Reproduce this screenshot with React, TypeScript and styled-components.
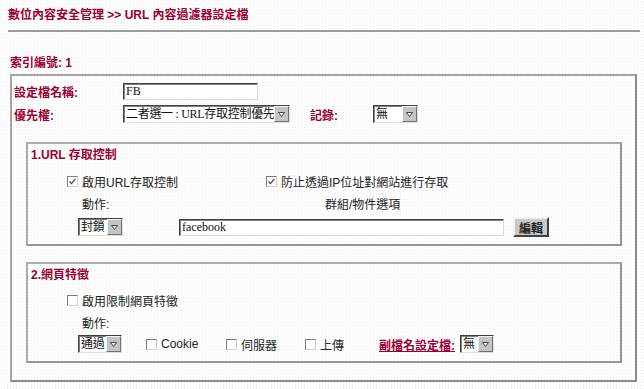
import styled, { createGlobalStyle } from "styled-components";

const GlobalStyle = createGlobalStyle`
    html, body {
        margin: 0;
        padding: 0;
        background-color: #fff;
        background-image: radial-gradient(#ececec 0.6px, transparent 0.7px);
        background-size: 3px 3px;
    }
    body {
        font-family: "Liberation Sans", "Noto Sans CJK TC", sans-serif;
        font-size: 12px;
        color: #222;
    }
`;

const Page = styled.div`
    width: 644px;
    height: 389px;
    overflow: hidden;
`;

const Header = styled.h1`
    margin: 0 4px 0 8px;
    height: 30px;
    line-height: 30px;
    font-size: 12px;
    font-weight: bold;
    color: #990033;
    border-bottom: 2px solid #9c9c9c;
    white-space: nowrap;
`;

const IndexLine = styled.div`
    margin: 24px 0 4px 10px;
    height: 14px;
    line-height: 14px;
    font-weight: bold;
    color: #990033;
`;

const OuterBox = styled.section`
    margin-left: 10px;
    width: 627px;
    height: 308px;
    box-sizing: border-box;
    border: 2px solid #a4a4a4;
    border-right-color: #8c8c8c;
    border-bottom-color: #8c8c8c;
    padding-top: 4px;
    display: flex;
    flex-direction: column;
`;

const FormRow = styled.div`
    display: flex;
    align-items: center;
    height: 22px;
    padding-left: 2px;
    & + & {
        margin-top: 1px;
    }
`;

const Label = styled.span<{ $w?: number }>`
    display: inline-block;
    width: ${(p) => (p.$w ? `${p.$w}px` : "auto")};
    font-weight: bold;
    color: #990033;
    white-space: nowrap;
`;

const LinkLabel = styled.a`
    font-weight: bold;
    color: #990033;
    text-decoration: underline;
    margin-right: 5px;
    white-space: nowrap;
    cursor: pointer;
`;

const TextInput = styled.input<{ $w: number }>`
    width: ${(p) => p.$w}px;
    height: 17px;
    box-sizing: border-box;
    padding: 0 2px;
    border: 1px solid;
    border-color: #404040 #d8d8d8 #d8d8d8 #404040;
    box-shadow: inset 1px 1px 0 #808080;
    background: #fff;
    font-family: "Liberation Serif", "Noto Sans CJK TC", serif;
    font-size: 12px;
    color: #111;
    outline: none;
`;

const SelectBox = styled.span<{ $w: number }>`
    display: inline-flex;
    align-items: stretch;
    width: ${(p) => p.$w}px;
    height: 18px;
    box-sizing: border-box;
    border: 1px solid;
    border-color: #404040 #e0e0e0 #e0e0e0 #404040;
    box-shadow: inset 1px 1px 0 #808080;
    background: #fff;
`;

const SelectValue = styled.span`
    flex: 1;
    min-width: 0;
    padding: 1px 0 0 2px;
    line-height: 15px;
    font-family: "Liberation Serif", "Noto Sans CJK TC", serif;
    letter-spacing: -0.3px;
    color: #111;
    white-space: nowrap;
    overflow: hidden;
`;

const SelectArrow = styled.span`
    width: 13px;
    flex-shrink: 0;
    display: flex;
    align-items: center;
    justify-content: center;
    background: #c4c4c4;
    border-left: 1px solid #f4f4f4;
    border-top: 1px solid #f4f4f4;
    border-right: 1px solid #707070;
    border-bottom: 1px solid #707070;
`;

const Select = ({ value, w }: { value: string; w: number }) => (
    <SelectBox $w={w}>
        <SelectValue>{value}</SelectValue>
        <SelectArrow>
            <svg width="7" height="5" viewBox="0 0 7 5">
                <path d="M0.5 0.5 H6.5 L3.5 4.5 Z" fill="#fff" stroke="#444" strokeWidth="1" />
            </svg>
        </SelectArrow>
    </SelectBox>
);

const Box = styled.section<{ $mt: number }>`
    margin: ${(p) => p.$mt}px 0 0 14px;
    width: 596px;
    box-sizing: border-box;
    border: 2px solid #acacac;
    border-right-color: #959595;
    border-bottom-color: #959595;
    padding-bottom: 6px;
`;

const BoxTitle = styled.h2`
    margin: 0;
    padding-left: 3px;
    height: 22px;
    line-height: 22px;
    font-size: 12px;
    font-weight: bold;
    color: #990033;
`;

const Row = styled.div<{ $pl: number; $mt?: number }>`
    display: flex;
    align-items: center;
    height: 22px;
    padding-left: ${(p) => p.$pl}px;
    margin-top: ${(p) => p.$mt ?? 0}px;
    white-space: nowrap;
`;

const Cell = styled.span<{ $w: number }>`
    display: inline-flex;
    align-items: center;
    width: ${(p) => p.$w}px;
    flex-shrink: 0;
`;

const CheckWrap = styled.label`
    display: inline-flex;
    align-items: center;
    gap: 4px;
    color: #222;
`;

const Box11 = styled.span`
    width: 11px;
    height: 11px;
    box-sizing: border-box;
    border: 1px solid;
    border-color: #7a7a7a #d0d0d0 #d0d0d0 #7a7a7a;
    background: #fff;
    display: inline-flex;
    align-items: center;
    justify-content: center;
`;

const Check = ({ checked, children }: { checked?: boolean; children: React.ReactNode }) => (
    <CheckWrap>
        <Box11>
            {checked && (
                <svg width="7" height="7" viewBox="0 0 7 7">
                    <path d="M0.5 3.5 L2.5 5.5 L6.5 1" fill="none" stroke="#555" strokeWidth="1.3" />
                </svg>
            )}
        </Box11>
        {children}
    </CheckWrap>
);

const Gap = styled.span<{ $w: number }>`
    display: inline-block;
    width: ${(p) => p.$w}px;
    flex-shrink: 0;
`;

const EditButton = styled.button`
    width: 36px;
    height: 20px;
    padding: 0;
    box-sizing: border-box;
    border: 2px solid;
    border-color: #f0f0f0 #404040 #404040 #f0f0f0;
    background: #c8c8c8;
    font-family: "Liberation Sans", "Noto Sans CJK TC", sans-serif;
    font-size: 12px;
    font-weight: bold;
    color: #222;
`;

export default function App() {
    return (
        <Page>
            <GlobalStyle />
            <Header>數位內容安全管理 &gt;&gt; URL 內容過濾器設定檔</Header>
            <IndexLine>索引編號: 1</IndexLine>
            <OuterBox>
                <FormRow>
                    <Label $w={109}>設定檔名稱:</Label>
                    <TextInput $w={135} defaultValue="FB" />
                </FormRow>
                <FormRow>
                    <Label $w={109}>優先權:</Label>
                    <Select value="二者選一 : URL存取控制優先" w={167} />
                    <Gap $w={20} />
                    <Label $w={63}>記錄:</Label>
                    <Select value="無" w={45} />
                </FormRow>

                <Box $mt={17}>
                    <BoxTitle>1.URL 存取控制</BoxTitle>
                    <Row $pl={39} $mt={4}>
                        <Cell $w={199}>
                            <Check checked>啟用URL存取控制</Check>
                        </Cell>
                        <Check checked>防止透過IP位址對網站進行存取</Check>
                    </Row>
                    <Row $pl={54}>
                        <Cell $w={243}>動作:</Cell>
                        群組/物件選項
                    </Row>
                    <Row $pl={50} $mt={2}>
                        <Select value="封鎖" w={45} />
                        <Gap $w={56} />
                        <TextInput $w={325} defaultValue="facebook" />
                        <Gap $w={9} />
                        <EditButton>編輯</EditButton>
                    </Row>
                </Box>

                <Box $mt={16}>
                    <BoxTitle>2.網頁特徵</BoxTitle>
                    <Row $pl={39} $mt={3}>
                        <Check>啟用限制網頁特徵</Check>
                    </Row>
                    <Row $pl={54}>動作:</Row>
                    <Row $pl={50}>
                        <Select value="通過" w={44} />
                        <Gap $w={24} />
                        <Cell $w={80}>
                            <Check>Cookie</Check>
                        </Cell>
                        <Cell $w={79}>
                            <Check>伺服器</Check>
                        </Cell>
                        <Cell $w={74}>
                            <Check>上傳</Check>
                        </Cell>
                        <LinkLabel>副檔名設定檔:</LinkLabel>
                        <Select value="無" w={34} />
                    </Row>
                </Box>
            </OuterBox>
        </Page>
    );
}
